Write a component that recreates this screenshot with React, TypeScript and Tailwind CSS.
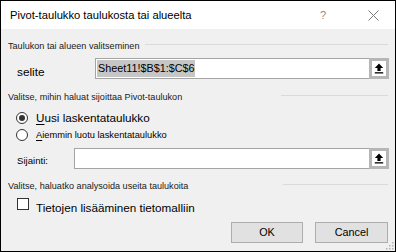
import React from "react"

const UploadIcon = () => (
    <svg width="10" height="11" viewBox="0 0 10 11">
        <path d="M5 0.5 L9.2 5 H6.6 V8 H3.4 V5 H0.8 Z" fill="#000" />
        <rect x="0.8" y="9.2" width="8.4" height="1.3" fill="#000" />
    </svg>
)

const RefInput = ({ left, value }: { left: number; value?: string }) => (
    <div className="flex flex-1 h-[21px]" style={{ marginLeft: left }}>
        <div className="flex-1 bg-white border border-[#a4a4a4] border-r-0 flex items-center pl-[1px]">
            {value && (
                <span className="bg-[#c6c6c6] text-black text-[10.8px] leading-[17px] px-[1px]">{value}</span>
            )}
        </div>
        <div className="w-[20px] h-[21px] border-[3px] border-[#b6b6b6] bg-white flex items-center justify-center">
            <UploadIcon />
        </div>
    </div>
)

const SectionTitle = ({ text, lineStart, className }: { text: string; lineStart: number; className: string }) => (
    <div className={`flex items-center h-[16px] ${className}`}>
        <span className="text-[9.1px] leading-[16px] text-[#1a1a1a] whitespace-nowrap" style={{ width: lineStart }}>{text}</span>
        <div className="flex-1 h-px bg-[#dadada] mb-[4px] mr-[1px]" />
    </div>
)

export default function App() {
    return (
        <div className="w-[396px] h-[252px] border border-black flex flex-col font-['Liberation_Sans',Arial,sans-serif] text-black relative">
            {/* title bar */}
            <div className="h-[28px] bg-white flex items-center pl-[9px] shrink-0">
                <span className="text-[11.2px] leading-[28px] whitespace-nowrap">Pivot-taulukko taulukosta tai alueelta</span>
                <span className="ml-auto text-[11px] text-[#8a8a8a] w-[10px] text-center">?</span>
                <div className="ml-[40px] mr-[16px] flex items-center">
                    <svg width="11" height="11" viewBox="0 0 11 11">
                        <path d="M0.5 0.5 L10.5 10.5 M10.5 0.5 L0.5 10.5" stroke="#7a7a7a" strokeWidth="1" />
                    </svg>
                </div>
            </div>

            {/* body */}
            <div className="flex-1 bg-[#f0f0f0] flex flex-col pl-[7px] pr-[6px]">
                <SectionTitle text="Taulukon tai alueen valitseminen" lineStart={137} className="mt-[9px]" />

                <div className="flex h-[21px] mt-[4px]">
                    <span className="ml-[9px] w-[78px] text-[11.8px] leading-[21px] mt-[4px]">selite</span>
                    <RefInput left={0} value="Sheet11!$B$1:$C$6" />
                </div>

                <SectionTitle text="Valitse, mihin haluat sijoittaa Pivot-taulukon" lineStart={273} className="mt-[10px]" />

                <div className="flex items-center h-[16px] mt-[5px] ml-[8px]">
                    <div className="w-[12px] h-[12px] rounded-full border border-[#333] bg-white flex items-center justify-center">
                        <div className="w-[6px] h-[6px] rounded-full bg-[#333]" />
                    </div>
                    <span className="ml-[8px] text-[11.7px] leading-[16px]"><span className="underline underline-offset-2">U</span>usi laskentataulukko</span>
                </div>

                <div className="flex items-center h-[16px] mt-[1px] ml-[8px]">
                    <div className="w-[12px] h-[12px] rounded-full border border-[#333] bg-white" />
                    <span className="ml-[8px] text-[9.3px] leading-[16px]"><span className="underline underline-offset-2">A</span>iemmin luotu laskentataulukko</span>
                </div>

                <div className="flex h-[21px] mt-[5px]">
                    <span className="ml-[9px] w-[57px] text-[9.6px] leading-[21px] mt-[2px]">Sijainti:</span>
                    <RefInput left={0} />
                </div>

                <SectionTitle text="Valitse, haluatko analysoida useita taulukoita" lineStart={275} className="mt-[9px]" />

                <div className="flex items-start h-[18px] mt-[3px] ml-[9px]">
                    <div className="w-[12px] h-[12px] border border-[#333] bg-white mt-[1px]" />
                    <span className="ml-[7px] text-[11.7px] leading-[18px] mt-[2px]">Tietojen lisääminen tietomalliin</span>
                </div>

                <div className="flex justify-end gap-[12px] mt-[7px] mr-[1px]">
                    <button className="w-[72px] h-[21px] bg-[#e1e1e1] border border-[#adadad] text-[10.8px] leading-[19px] text-black">OK</button>
                    <button className="w-[73px] h-[21px] bg-[#e1e1e1] border border-[#adadad] text-[10.8px] leading-[19px] text-black">Cancel</button>
                </div>
            </div>

            {/* resize grip */}
            <svg className="absolute right-[1px] bottom-[1px]" width="9" height="9" viewBox="0 0 9 9">
                <rect x="7" y="1" width="1.5" height="1.5" fill="#b3b3b3" />
                <rect x="4" y="4" width="1.5" height="1.5" fill="#b3b3b3" />
                <rect x="7" y="4" width="1.5" height="1.5" fill="#b3b3b3" />
                <rect x="1" y="7" width="1.5" height="1.5" fill="#b3b3b3" />
                <rect x="4" y="7" width="1.5" height="1.5" fill="#b3b3b3" />
                <rect x="7" y="7" width="1.5" height="1.5" fill="#b3b3b3" />
            </svg>
        </div>
    )
}
